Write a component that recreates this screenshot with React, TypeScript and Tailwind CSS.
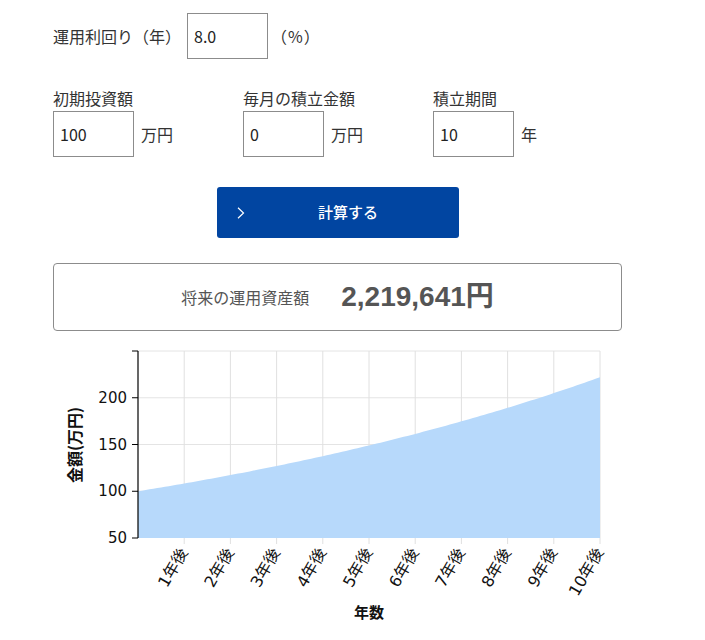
import React from "react";

const JP = "font-['Noto_Sans_CJK_JP','Noto_Sans',sans-serif]";

// chart geometry (page coords, svg sits at top 335)
const TOP = 335;
const X0 = 138;
const X1 = 600;
const Y_BOTTOM = 538 - TOP;
const Y_TOP = 351 - TOP;
const V_MIN = 50;
const V_MAX = 250;

const xOf = (year: number) => X0 + ((X1 - X0) * year) / 10;
const yOf = (v: number) => Y_BOTTOM - ((v - V_MIN) / (V_MAX - V_MIN)) * (Y_BOTTOM - Y_TOP);

function Chart() {
  const pts: string[] = [];
  for (let m = 0; m <= 120; m++) {
    const v = 100 * Math.pow(1 + 0.08 / 12, m);
    pts.push(`${xOf(m / 12).toFixed(2)},${yOf(v).toFixed(2)}`);
  }
  const area = `M${X0},${Y_BOTTOM} L${pts.join(" L")} L${X1},${Y_BOTTOM} Z`;
  const years = Array.from({ length: 10 }, (_, i) => i + 1);
  const yTicks = [50, 100, 150, 200];

  return (
    <svg width={705} height={300} className="block">
      {/* grid */}
      {[100, 150, 200, 250].map((v) => (
        <line key={v} x1={X0} x2={X1} y1={yOf(v)} y2={yOf(v)} stroke="#e4e4e4" strokeWidth={1} />
      ))}
      {years.map((y) => (
        <line key={y} x1={xOf(y)} x2={xOf(y)} y1={Y_TOP} y2={Y_BOTTOM + 6} stroke="#e0e0e0" strokeWidth={1} />
      ))}
      <path d={area} fill="#b7d9fb" />
      {/* y axis */}
      <line x1={X0} x2={X0} y1={Y_TOP} y2={Y_BOTTOM} stroke="#000" strokeWidth={1.2} />
      <line x1={X0 - 6} x2={X0} y1={Y_TOP} y2={Y_TOP} stroke="#000" strokeWidth={1} />
      {yTicks.map((v) => (
        <g key={v}>
          <line x1={X0 - 6} x2={X0} y1={yOf(v)} y2={yOf(v)} stroke="#000" strokeWidth={1} />
          <text
            x={X0 - 11}
            y={yOf(v) + 5}
            textAnchor="end"
            fontSize={15}
            fill="#111"
            fontFamily="'DejaVu Sans', sans-serif"
          >
            {v}
          </text>
        </g>
      ))}
      {/* x labels */}
      {years.map((y) => (
        <text
          key={y}
          x={xOf(y) + 4}
          y={Y_BOTTOM + 14}
          textAnchor="end"
          fontSize={16}
          fill="#111"
          fontFamily="'DejaVu Sans','Noto Sans CJK JP', sans-serif"
          transform={`rotate(-60 ${xOf(y) + 4} ${Y_BOTTOM + 14})`}
        >
          {y}年後
        </text>
      ))}
      <text
        x={77}
        y={445 - TOP}
        textAnchor="middle"
        dominantBaseline="middle"
        fontSize={16}
        fontWeight={700}
        fill="#111"
        fontFamily="'Noto Sans CJK JP', sans-serif"
        transform={`rotate(-90 77 ${445 - TOP})`}
      >
        金額(万円)
      </text>
      <text
        x={369}
        y={618 - TOP}
        textAnchor="middle"
        fontSize={15}
        fontWeight={700}
        fill="#111"
        fontFamily="'Noto Sans CJK JP', sans-serif"
      >
        年数
      </text>
    </svg>
  );
}

function Field({ label, value, unit }: { label: string; value: string; unit: string }) {
  return (
    <div className="w-[190px]">
      <div className="h-[25px] text-[16px] leading-[24px] text-[#333]">{label}</div>
      <div className="flex items-center gap-[7px]">
        <div className="flex h-[46px] w-[81px] items-center border border-[#8c8c8c] px-[6px] text-[16px] text-[#222]">
          {value}
        </div>
        <span className="text-[16px] text-[#333]">{unit}</span>
      </div>
    </div>
  );
}

export default function App() {
  return (
    <div className={`h-[640px] w-[705px] overflow-hidden bg-white ${JP}`}>
      <div className="pl-[53px] pt-[13px]">
        <div className="flex items-center">
          <span className="w-[134px] text-[16px] text-[#333]">運用利回り（年）</span>
          <div className="flex h-[46px] w-[81px] items-center border border-[#8c8c8c] px-[6px] text-[16px] text-[#222]">
            8.0
          </div>
          <span className="ml-[3px] text-[16px] tracking-[1px] text-[#333]">（%）</span>
        </div>

        <div className="mt-[27px] flex">
          <Field label="初期投資額" value="100" unit="万円" />
          <Field label="毎月の積立金額" value="0" unit="万円" />
          <Field label="積立期間" value="10" unit="年" />
        </div>

        <button className="relative ml-[164px] mt-[30px] flex h-[51px] w-[242px] items-center justify-center rounded-[3px] bg-[#0145a1] pl-[20px] text-[15px] font-medium text-white">
          <svg
            className="absolute left-[20px] top-[20px]"
            width="8"
            height="12"
            viewBox="0 0 8 12"
            fill="none"
            stroke="#fff"
            strokeWidth="1.2"
          >
            <path d="M1 0.8 L6.5 6 L1 11.2" />
          </svg>
          計算する
        </button>

        <div className="mt-[25px] flex h-[68px] w-[569px] items-center justify-center gap-[32px] rounded-[4px] border border-[#8c8c8c] text-[#555]">
          <span className="text-[16px]">将来の運用資産額</span>
          <span className="font-['Liberation_Sans','Noto_Sans_CJK_JP',sans-serif] text-[28px] font-bold">
            2,219,641円
          </span>
        </div>
      </div>
      <div className="mt-[4px]">
        <Chart />
      </div>
    </div>
  );
}
